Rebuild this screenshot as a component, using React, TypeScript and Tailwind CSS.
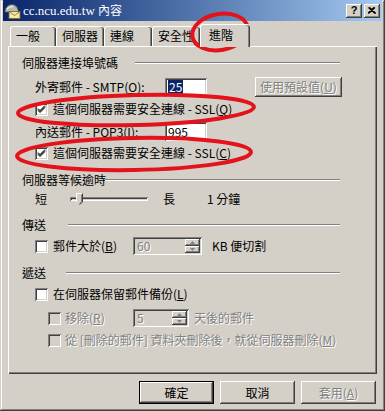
import React from "react";

const raised =
  "bg-[#d4d0c8] shadow-[inset_-1px_-1px_#404040,inset_1px_1px_#fff,inset_-2px_-2px_#808080,inset_2px_2px_#d4d0c8]";
const sunken =
  "shadow-[inset_1px_1px_#808080,inset_-1px_-1px_#fff,inset_2px_2px_#404040,inset_-2px_-2px_#d4d0c8]";
const grayText = "text-[#808080] [text-shadow:1px_1px_#fff]";

function U({ children }: { children: React.ReactNode }) {
  return <span className="underline underline-offset-1">{children}</span>;
}

function Check({ checked, disabled }: { checked?: boolean; disabled?: boolean }) {
  return (
    <div
      className={`w-[13px] h-[13px] shrink-0 ${sunken} ${disabled ? "bg-[#d4d0c8]" : "bg-white"} flex items-center justify-center`}
    >
      {checked && (
        <svg width="13" height="13" viewBox="0 0 13 13">
          <path d="M3 5.5 L5 7.5 L10 2.5 M3 6.5 L5 8.5 L10 3.5 M3 7.5 L5 9.5 L10 4.5" stroke="#000" strokeWidth="1" fill="none" />
        </svg>
      )}
    </div>
  );
}

function GroupTitle({ label, w }: { label: string; w: string }) {
  return (
    <div className="flex items-center h-[14px] w-[318px]">
      <div className={`${w} shrink-0 whitespace-nowrap`}>{label}</div>
      <div className="flex-1 h-[2px] border-t border-t-[#808080] border-b border-b-white" />
    </div>
  );
}

function Spinner({ value, w }: { value: string; w: string }) {
  return (
    <div className={`${w} h-[18px] ${sunken} bg-[#d4d0c8] flex items-center pl-[4px] pr-[2px]`}>
      <span className={`flex-1 ${grayText}`}>{value}</span>
      <div className="flex flex-col w-[15px] h-[14px]">
        <div className={`flex-1 ${raised} flex items-center justify-center`}>
          <svg width="5" height="3" viewBox="0 0 5 3">
            <path d="M2.5 0 L5 3 L0 3 Z" fill="#808080" />
          </svg>
        </div>
        <div className={`flex-1 ${raised} flex items-center justify-center`}>
          <svg width="5" height="3" viewBox="0 0 5 3">
            <path d="M0 0 L5 0 L2.5 3 Z" fill="#808080" />
          </svg>
        </div>
      </div>
    </div>
  );
}

function Tab({ label, w, active }: { label: string; w: string; active?: boolean }) {
  if (active) {
    return (
      <div
        className={`${w} h-[23px] mb-[-1px] relative z-10 bg-[#d4d0c8] rounded-t-[3px] border-l border-t border-white shadow-[inset_-1px_0_#404040,inset_-2px_0_#808080] pl-[8px] pt-[3px]`}
      >
        {label}
      </div>
    );
  }
  return (
    <div
      className={`${w} h-[20px] bg-[#d4d0c8] rounded-t-[3px] border-l border-t border-white shadow-[inset_-1px_0_#404040,inset_-2px_0_#808080] pl-[5px] pt-[2px]`}
    >
      {label}
    </div>
  );
}

function Button({ children, def, disabled }: { children: React.ReactNode; def?: boolean; disabled?: boolean }) {
  return (
    <div
      className={`w-[75px] h-[23px] flex items-center justify-center ${
        def
          ? "border border-black bg-[#d4d0c8] shadow-[inset_-1px_-1px_#404040,inset_1px_1px_#fff,inset_-2px_-2px_#808080]"
          : raised
      } ${disabled ? grayText : ""}`}
    >
      {children}
    </div>
  );
}

export default function App() {
  return (
    <div className="relative w-[385px] h-[411px] overflow-hidden bg-[#d4d0c8] font-['Noto_Sans_CJK_TC',sans-serif] text-[12px] leading-[14px] text-black shadow-[inset_-1px_-1px_#404040,inset_1px_1px_#d4d0c8,inset_-2px_-2px_#808080,inset_2px_2px_#fff] px-[3px] flex flex-col">
      {/* title bar */}
      <div className="h-[21px] shrink-0 flex items-center bg-gradient-to-r from-[#0a246a] to-[#a6caf0] pl-[1px] pr-[2px]">
        <svg width="17" height="16" viewBox="0 0 17 16" className="shrink-0">
          <path d="M1 8 Q2 2 8 1.5 Q13 2 14 7 L14 9 L1 9 Z" fill="#b8b8b8" stroke="#5a5a5a" strokeWidth="0.8" />
          <path d="M3 6 Q5 3.5 9 3.5" stroke="#fff" strokeWidth="1" fill="none" />
          <rect x="5" y="8.5" width="11" height="7" fill="#f3e9a8" stroke="#7a6a20" strokeWidth="0.8" />
          <path d="M5 8.5 L10.5 12.5 L16 8.5" stroke="#7a6a20" strokeWidth="0.8" fill="none" />
        </svg>
        <span className="ml-[2px] text-white font-['Liberation_Serif','Noto_Sans_CJK_TC',serif] text-[13px]">
          cc.ncu.edu.tw <span className="font-['Noto_Sans_CJK_TC'] text-[12px]">內容</span>
        </span>
        <div className="ml-auto flex items-center">
          <div className={`w-[16px] h-[14px] ${raised} flex items-center justify-center font-bold font-['Liberation_Sans'] text-[11px] leading-none`}>
            ?
          </div>
          <div className={`ml-[2px] w-[16px] h-[14px] ${raised} flex items-center justify-center`}>
            <svg width="8" height="7" viewBox="0 0 8 7">
              <path d="M0.5 0.5 L7 6.5 M7 0.5 L0.5 6.5 M1.5 0.5 L8 6.5 M6 0.5 L-0.5 6.5" stroke="#000" strokeWidth="1.1" />
            </svg>
          </div>
        </div>
      </div>

      {/* tabs */}
      <div className="mt-[3px] h-[22px] flex items-end pl-[7px]">
        <Tab label="一般" w="w-[46px]" />
        <Tab label="伺服器" w="w-[48px]" />
        <Tab label="連線" w="w-[48px]" />
        <Tab label="安全性" w="w-[48px]" />
        <Tab label="進階" w="w-[50px]" active />
      </div>

      {/* panel */}
      <div className="ml-[5px] w-[369px] h-[328px] shrink-0 bg-[#d4d0c8] shadow-[inset_1px_1px_#fff,inset_-1px_-1px_#404040,inset_-2px_-2px_#808080] pt-[10px] pl-[14px] flex flex-col">
        <GroupTitle label="伺服器連接埠號碼" w="w-[113px]" />

        <div className="mt-[7px] h-[20px] flex items-center pl-[13px]">
          <div className="w-[130px] whitespace-nowrap">
            外寄郵件 - SMTP(<U>O</U>):
          </div>
          <div className={`w-[42px] h-[19px] bg-white ${sunken} flex items-center pl-[3px]`}>
            <span className="bg-[#0a246a] text-white px-[1px]">25</span>
          </div>
          <div className={`ml-[48px] w-[87px] h-[20px] ${raised} flex items-center justify-center ${grayText}`}>
            使用預設值(<U>U</U>)
          </div>
        </div>

        <div className="mt-[5px] h-[14px] flex items-center pl-[13px]">
          <Check checked />
          <span className="ml-[5px] whitespace-nowrap">
            這個伺服器需要安全連線 - SSL(<U>Q</U>)
          </span>
        </div>

        <div className="mt-[6px] h-[19px] flex items-center pl-[13px]">
          <div className="w-[130px] whitespace-nowrap">
            內送郵件 - POP3(<U>I</U>):
          </div>
          <div className={`w-[42px] h-[19px] bg-white ${sunken} flex items-center pl-[3px]`}>995</div>
        </div>

        <div className="mt-[5px] h-[14px] flex items-center pl-[13px]">
          <Check checked />
          <span className="ml-[5px] whitespace-nowrap">
            這個伺服器需要安全連線 - SSL(<U>C</U>)
          </span>
        </div>

        <div className="mt-[13px]">
          <GroupTitle label="伺服器等候逾時" w="w-[83px]" />
        </div>

        <div className="mt-[3px] h-[18px] flex items-center pl-[13px]">
          <span className="w-[35px]">短</span>
          <div className="relative w-[78px] h-[18px] flex items-center">
            <div className={`w-full h-[4px] ${sunken}`} />
            <div className="absolute left-[6px] top-[3px] w-[7px] h-[12px]">
              <svg width="7" height="12" viewBox="0 0 7 12">
                <path d="M0.5 0.5 H6.5 V9 L3.5 11.5 L0.5 9 Z" fill="#d4d0c8" />
                <path d="M0.5 9 V0.5 H6" stroke="#fff" fill="none" />
                <path d="M6.5 0.5 V9 L3.5 11.5" stroke="#404040" fill="none" />
                <path d="M5.5 1.5 V8.5 L3.5 10.3" stroke="#808080" fill="none" />
              </svg>
            </div>
          </div>
          <span className="ml-[15px] w-[44px]">長</span>
          <span>1 分鐘</span>
        </div>

        <div className="mt-[10px]">
          <GroupTitle label="傳送" w="w-[46px]" />
        </div>

        <div className="mt-[5px] h-[18px] flex items-center pl-[13px]">
          <Check />
          <span className="ml-[5px] w-[80px] whitespace-nowrap">
            郵件大於(<U>B</U>)
          </span>
          <Spinner value="60" w="w-[69px]" />
          <span className="ml-[10px]">KB 便切割</span>
        </div>

        <div className="mt-[11px]">
          <GroupTitle label="遞送" w="w-[44px]" />
        </div>

        <div className="mt-[7px] h-[14px] flex items-center pl-[13px]">
          <Check />
          <span className="ml-[5px] whitespace-nowrap">
            在伺服器保留郵件備份(<U>L</U>)
          </span>
        </div>

        <div className="mt-[8px] h-[18px] flex items-center pl-[26px]">
          <Check disabled />
          <span className={`ml-[4px] w-[68px] whitespace-nowrap ${grayText}`}>
            移除(<U>R</U>)
          </span>
          <Spinner value="5" w="w-[56px]" />
          <span className={`ml-[5px] ${grayText}`}>天後的郵件</span>
        </div>

        <div className="mt-[6px] h-[14px] flex items-center pl-[26px]">
          <Check disabled />
          <span className={`ml-[4px] whitespace-nowrap ${grayText}`}>
            從 [刪除的郵件] 資料夾刪除後，就從伺服器刪除(<U>M</U>)
          </span>
        </div>
      </div>

      {/* buttons */}
      <div className="mt-[7px] flex gap-[6px] pl-[136px]">
        <Button def>確定</Button>
        <Button>取消</Button>
        <Button disabled>
          套用(<U>A</U>)
        </Button>
      </div>

      {/* red annotation circles */}
      <svg className="absolute inset-0 pointer-events-none" width="385" height="411" viewBox="0 0 385 411">
        <ellipse cx="220" cy="32" rx="28" ry="18" transform="rotate(-10 220 32)" fill="none" stroke="#e3121b" strokeWidth="4" />
        <ellipse cx="136" cy="110" rx="118" ry="15" transform="rotate(-1.5 136 110)" fill="none" stroke="#e3121b" strokeWidth="4" />
        <ellipse cx="134" cy="154" rx="117" ry="16" transform="rotate(-1 134 154)" fill="none" stroke="#e3121b" strokeWidth="4" />
      </svg>
    </div>
  );
}
